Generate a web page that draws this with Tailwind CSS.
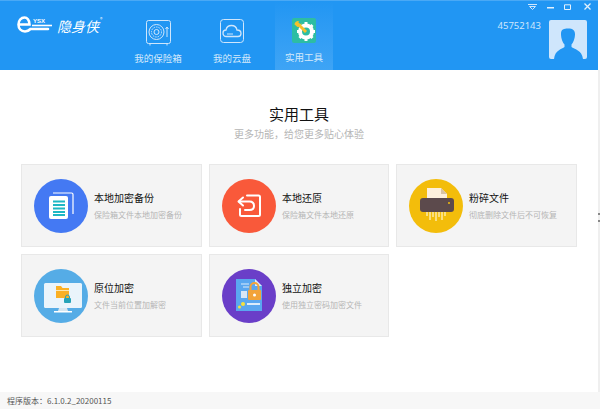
<!DOCTYPE html>
<html lang="zh-CN">
<head>
    <meta charset="UTF-8">
    <meta name="viewport" content="width=device-width, initial-scale=1.0">
    <title>隐身侠</title>
    <script src="https://cdn.jsdelivr.net/npm/@tailwindcss/browser@4"></script>
</head>
<body class="bg-white overflow-hidden font-['Noto_Sans_CJK_SC','Noto_Sans',sans-serif]">
    <div class="w-[600px] h-[409px] flex flex-col">
        <!-- 顶部导航 -->
        <header class="h-[70px] flex bg-[#2196f3] border-t border-[#4aa9f5] mr-[2px]">
            <div class="w-[121px] pl-[17px] pt-[14px] flex items-start text-white">
                <svg class="w-[36px] h-[20px]" viewBox="0 0 36 20" fill="none">
                    <path d="M2.500 9.500H12.500C12.500 5 10 2.500 7.500 2.500C4 2.500 1.500 5.500 1.500 9.500C1.500 13.500 4 16.500 8 16.500C10.500 16.500 12 15.500 13.500 14H31" stroke="white" stroke-width="2.600" stroke-linecap="round"/>
                    <path d="M15 10.500H35" stroke="white" stroke-width="1.600"/>
                    <text x="16" y="8" font-size="6" font-weight="700" fill="white" font-family="Liberation Sans">YSX</text>
                </svg>
                <span class="ml-[4px] mt-[1px] text-[14px] leading-[20px] italic">隐身侠</span>
                <span class="ml-[1px] text-[5px] leading-[8px]">®</span>
            </div>
            <nav class="flex text-[9.500px] leading-[14px] text-[#d4e9fb]">
                <a class="w-[74px] flex flex-col items-center pt-[19px]">
                    <svg class="w-[25px] h-[26px]" viewBox="0 0 25 26" fill="none" stroke="#cfe6fc" stroke-width="1">
                        <rect x="0.500" y="0.500" width="24" height="23" rx="2"/>
                        <circle cx="10.500" cy="12" r="7.500"/>
                        <circle cx="10.500" cy="12" r="5" stroke-dasharray="1.500 1"/>
                        <circle cx="10.500" cy="12" r="2.500"/>
                        <path d="M21 7V17M19.500 9L21 7L22.500 9M4 24V25.500M21 24V25.500"/>
                    </svg>
                    <span class="mt-[5px]">我的保险箱</span>
                </a>
                <a class="w-[74px] flex flex-col items-center pt-[18px]">
                    <svg class="w-[24px] h-[26px]" viewBox="0 0 24 26" fill="none" stroke="#cfe6fc" stroke-width="1">
                        <rect x="0.500" y="0.500" width="23" height="23" rx="3"/>
                        <path d="M6.500 17.500C4 17.500 3 15.500 3 14C3 12 4.500 11 6 11C6.500 8 9 6.500 11.500 6.500C14.500 6.500 16.500 8.500 17 11C19.500 11 21 12.500 21 14.500C21 16.500 19.500 17.500 18 17.500Z" stroke-width="1.300"/>
                        <path d="M7 15H13" stroke-width="1"/>
                    </svg>
                    <span class="mt-[6px]">我的云盘</span>
                </a>
                <a class="w-[58px] ml-[6px] flex flex-col items-center pt-[17px] bg-gradient-to-b from-[#2196f3] to-[#3ea4f5]">
                    <svg class="w-[24px] h-[25px]" viewBox="0 0 24 25">
                        <rect width="24" height="25" rx="2" fill="#2dbda3"/>
                        <path d="M14 4V8M14 19V23M5 13.500H8M20 13.500H23M7.500 7L9.500 9M18.500 18L20.500 20M7.500 20L9.500 18M18.500 9L20.500 7" stroke="white" stroke-width="3"/>
                        <circle cx="14" cy="13.500" r="6" fill="none" stroke="white" stroke-width="4"/>
                        <path d="M5 5L14 14" stroke="#f6c02c" stroke-width="3"/>
                        <path d="M2.500 6.500C2.500 4 5 2.500 7 3L5.500 5.500L7.500 7L9.500 5C9.500 7.500 8 9 5.500 9Z" fill="#f6c02c"/>
                    </svg>
                    <span class="mt-[7px]">实用工具</span>
                </a>
            </nav>
            <div class="ml-auto w-[110px] shrink-0 flex flex-col">
                <div class="h-[11px] flex items-center justify-end pr-[7px]">
                    <svg class="w-[9px] h-[6px]" viewBox="0 0 9 6" fill="none" stroke="#cfe6fc"><path d="M0 .500H9M1.500 2.500H7.500L4.500 5.500Z"/></svg>
                    <svg class="w-[7px] h-[6px] ml-[10px]" viewBox="0 0 7 6" fill="#e3f1fd"><rect y="3" width="7" height="1.500"/></svg>
                    <svg class="w-[7px] h-[6px] ml-[10px]" viewBox="0 0 7 6" fill="none" stroke="#e3f1fd"><path d="M.500 .800H6.500V5.500H.500Z"/></svg>
                    <svg class="w-[7px] h-[7px] ml-[13px]" viewBox="0 0 7 7" fill="none" stroke="#e3f1fd" stroke-width="1.300"><path d="M.500 .500L6.500 6.500M6.500 .500L.500 6.500"/></svg>
                </div>
                <div class="flex items-start justify-end mt-[8px] pr-[11px]">
                    <span class="-mt-[1px] text-[9.500px] leading-[14px] text-[#cfe6fc] font-['Noto_Sans']">45752143</span>
                    <div class="ml-[8px] w-[38px] h-[39px] shrink-0 rounded-[2px] bg-[#cfe6fc] overflow-hidden">
                        <svg class="w-full h-full" viewBox="0 0 38 39" fill="#2196f3">
                            <path d="M12 14C12 9 15 8.500 19 8.500C24 8.500 26 10.500 26 14C26 19 24 23 22.500 24.500V27C25 29 33 30 34 39H5C6 30 13 29 15.500 27V24.500C14 23 12 19 12 14Z"/>
                        </svg>
                    </div>
                </div>
            </div>
        </header>

        <main class="relative flex-1 flex flex-col border-r-2 border-[#efefef]">
            <h1 class="mt-[33px] text-center text-[15px] leading-[22px] font-normal text-[#111]">实用工具</h1>
            <p class="mt-[2px] text-center text-[10px] leading-[14px] text-[#b5b5b5]">更多功能，给您更多贴心体验</p>

            <!-- 工具一覧 -->
            <div class="mt-[23px] ml-[21px] grid grid-cols-[181px_180px_181px] auto-rows-[83px] gap-x-[7px] gap-y-[7px]">
                <div class="flex items-center pl-[12px] bg-[#f4f4f4] border border-[#e8e8e8]">
                    <div class="w-[54px] h-[54px] rounded-full bg-[#4479f3] shrink-0">
                        <svg viewBox="0 0 54 54">
                            <path d="M19 14H37.500A1.500 1.500 0 0 1 39 15.500V35" fill="none" stroke="white" stroke-width="1.200"/>
                            <rect x="15" y="17" width="19" height="23" rx="2" fill="white"/>
                            <path d="M19 22.500H31M19 26H31M19 29.500H31M19 33H31M19 36H31" stroke="#1fb8c4" stroke-width="1.800"/>
                        </svg>
                    </div>
                    <div class="ml-[6px]">
                        <h2 class="text-[10px] leading-[14px] font-normal text-[#111]">本地加密备份</h2>
                        <p class="mt-[4px] text-[8px] leading-[12px] text-[#b5b5b5]">保险箱文件本地加密备份</p>
                    </div>
                </div>
                <div class="flex items-center pl-[12px] bg-[#f4f4f4] border border-[#e8e8e8]">
                    <div class="w-[54px] h-[54px] rounded-full bg-[#f9593a] shrink-0">
                        <svg viewBox="0 0 54 54" fill="none" stroke="white" stroke-width="2" stroke-linejoin="round" stroke-linecap="round">
                            <path d="M25 16.500H36.500A1.500 1.500 0 0 1 38 18V35.500A1.500 1.500 0 0 1 36.500 37H19.500A1.500 1.500 0 0 1 18 35.500V30"/>
                            <path d="M17 22.500H27.500C30.500 22.500 32 24.500 32 27C32 29.500 30.500 31 27.500 31H23"/>
                            <path d="M21 18.500L16.500 22.500L21 26.500"/>
                        </svg>
                    </div>
                    <div class="ml-[6px]">
                        <h2 class="text-[10px] leading-[14px] font-normal text-[#111]">本地还原</h2>
                        <p class="mt-[4px] text-[8px] leading-[12px] text-[#b5b5b5]">保险箱文件本地还原</p>
                    </div>
                </div>
                <div class="flex items-center pl-[12px] bg-[#f4f4f4] border border-[#e8e8e8]">
                    <div class="w-[54px] h-[54px] rounded-full bg-[#f3bd0b] shrink-0">
                        <svg viewBox="0 0 54 54">
                            <path d="M18 9H32L38 15V22H18Z" fill="#fdf0dc"/>
                            <path d="M32 9L38 15H32Z" fill="#d9c4a6"/>
                            <rect x="11" y="19" width="34" height="14" rx="3" fill="#5c4a4c"/>
                            <circle cx="40" cy="24" r="1" fill="#f3bd0b"/>
                            <path d="M18 33V37M21 33V41M24 33V38M27 33V42M30 33V38M33 33V41M36 33V37" stroke="#fdeaa8" stroke-width="1.500"/>
                        </svg>
                    </div>
                    <div class="ml-[6px]">
                        <h2 class="text-[10px] leading-[14px] font-normal text-[#111]">粉碎文件</h2>
                        <p class="mt-[4px] text-[8px] leading-[12px] text-[#b5b5b5]">彻底删除文件后不可恢复</p>
                    </div>
                </div>
                <div class="flex items-center pl-[12px] bg-[#f4f4f4] border border-[#e8e8e8]">
                    <div class="w-[54px] h-[54px] rounded-full bg-[#55ace6] shrink-0">
                        <svg viewBox="0 0 54 54">
                            <rect x="10" y="14" width="38" height="25" rx="1.500" fill="#eaf4fb"/>
                            <path d="M25 39H33L34 42H24Z" fill="#d8e6f0"/>
                            <rect x="20" y="42" width="18" height="1.500" fill="#fff"/>
                            <path d="M22 17H27L28.500 19H35V29H22Z" fill="#fbb024"/>
                            <rect x="22" y="21" width="13" height="1" fill="#fde6b0"/>
                            <rect x="30" y="29" width="7" height="5" rx="1" fill="#26a3b8"/>
                            <path d="M31.500 29V28A2 2 0 0 1 35.500 28V29" fill="none" stroke="#26a3b8"/>
                        </svg>
                    </div>
                    <div class="ml-[6px]">
                        <h2 class="text-[10px] leading-[14px] font-normal text-[#111]">原位加密</h2>
                        <p class="mt-[4px] text-[8px] leading-[12px] text-[#b5b5b5]">文件当前位置加解密</p>
                    </div>
                </div>
                <div class="flex items-center pl-[12px] bg-[#f4f4f4] border border-[#e8e8e8]">
                    <div class="w-[54px] h-[54px] rounded-full bg-[#6a3ec8] shrink-0">
                        <svg viewBox="0 0 54 54">
                            <path d="M14 10H33L40 17V42H14Z" fill="#5aa7f0"/>
                            <path d="M33 10L40 17H33Z" fill="#dcecfb"/>
                            <path d="M19 15H27M21 18H27" stroke="#dcecfb" stroke-width="1"/>
                            <rect x="19" y="22" width="6" height="7" fill="#d9e6f5"/>
                            <rect x="26" y="21" width="13" height="10" rx="1" fill="#f2a33a"/>
                            <path d="M28.500 21V18A4 4 0 0 1 36.500 18V21" fill="none" stroke="#f2a33a" stroke-width="2"/>
                            <circle cx="32.500" cy="26" r="1.500" fill="#fff"/>
                            <path d="M25 35H38" stroke="#dcecfb" stroke-width="2"/>
                            <circle cx="21" cy="35" r="2" fill="#f5e23c"/>
                            <circle cx="17.500" cy="38" r="1.500" fill="#f5e23c"/>
                        </svg>
                    </div>
                    <div class="ml-[6px]">
                        <h2 class="text-[10px] leading-[14px] font-normal text-[#111]">独立加密</h2>
                        <p class="mt-[4px] text-[8px] leading-[12px] text-[#b5b5b5]">使用独立密码加密文件</p>
                    </div>
                </div>
            </div>
            <!-- 右端の小さな印 -->
            <div class="absolute -right-[2px] top-[143px] w-[2px] h-[2px] bg-[#888]"></div>
            <div class="absolute -right-[2px] top-[150px] w-[2px] h-[2px] bg-[#888]"></div>
        </main>

        <footer class="h-[17px] pl-[7px] bg-[#f7f7f7] text-[8px] leading-[18px] text-[#555]">程序版本：6.1.0.2_20200115</footer>
    </div>
</body>
</html>
